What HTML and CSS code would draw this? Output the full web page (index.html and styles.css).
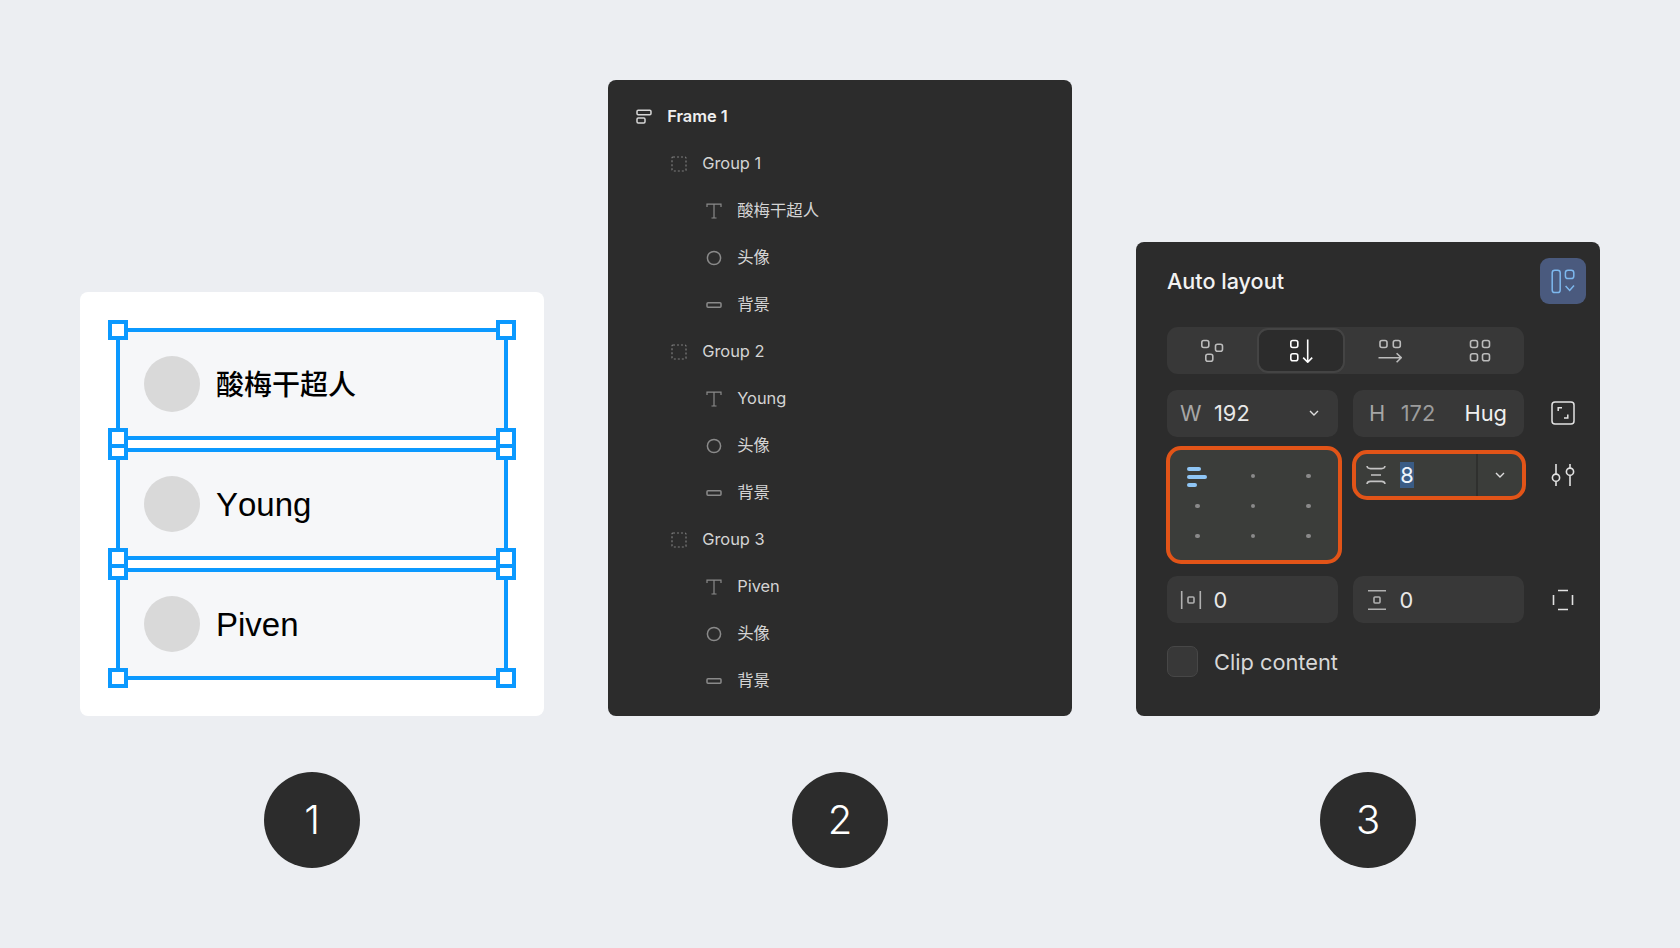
FILE: index.html
```html
<!DOCTYPE html>
<html lang="zh-CN">
<head>
<meta charset="utf-8">
<title>Auto layout</title>
<link rel="stylesheet" href="styles.css">
</head>
<body>
<svg class="defs" width="0" height="0" aria-hidden="true">
  <symbol id="i-group" viewBox="0 0 16 16"><rect x="1" y="1" width="14" height="14" rx="1" fill="none" stroke="#7d7d7d" stroke-width="1.2" stroke-dasharray="2 2"/></symbol>
  <symbol id="i-text" viewBox="0 0 16 16"><path d="M1 4V1.2H15V4M8 1.2V15M5.5 15H10.5" fill="none" stroke="#8a8a8a" stroke-width="1.2"/></symbol>
  <symbol id="i-ellipse" viewBox="0 0 16 16"><circle cx="8" cy="8" r="6.6" fill="none" stroke="#8a8a8a" stroke-width="1.5"/></symbol>
  <symbol id="i-rect" viewBox="0 0 16 16"><rect x="1" y="5.8" width="14" height="4.4" rx="1" fill="none" stroke="#8a8a8a" stroke-width="1.5"/></symbol>
  <symbol id="i-chev" viewBox="0 0 10 6"><path d="M1 1L5 5L9 1" fill="none" stroke="#dddddd" stroke-width="1.4"/></symbol>
</svg>

<main class="board">
  <section class="panel card">
    <div class="frame"><i class="h tl"></i><i class="h tr"></i><i class="h bl"></i><i class="h br"></i><span class="avatar"></span><span class="name zh">酸梅干超人</span></div>
    <div class="frame"><i class="h tl"></i><i class="h tr"></i><i class="h bl"></i><i class="h br"></i><span class="avatar"></span><span class="name">Young</span></div>
    <div class="frame"><i class="h tl"></i><i class="h tr"></i><i class="h bl"></i><i class="h br"></i><span class="avatar"></span><span class="name">Piven</span></div>
  </section>

  <section class="panel layers">
    <div class="layer root"><svg class="li" viewBox="0 0 16 16"><rect x="1" y="1.2" width="14" height="4.6" rx="1.2" fill="none" stroke="#d6d6d6" stroke-width="1.5"/><rect x="1" y="9" width="8" height="5" rx="1.2" fill="none" stroke="#d6d6d6" stroke-width="1.5"/></svg><span>Frame 1</span></div>
    <div class="layer l1"><svg class="li"><use href="#i-group"/></svg><span>Group 1</span></div>
    <div class="layer l2"><svg class="li"><use href="#i-text"/></svg><span class="cjk">酸梅干超人</span></div>
    <div class="layer l2"><svg class="li"><use href="#i-ellipse"/></svg><span class="cjk">头像</span></div>
    <div class="layer l2"><svg class="li"><use href="#i-rect"/></svg><span class="cjk">背景</span></div>
    <div class="layer l1"><svg class="li"><use href="#i-group"/></svg><span>Group 2</span></div>
    <div class="layer l2"><svg class="li"><use href="#i-text"/></svg><span>Young</span></div>
    <div class="layer l2"><svg class="li"><use href="#i-ellipse"/></svg><span class="cjk">头像</span></div>
    <div class="layer l2"><svg class="li"><use href="#i-rect"/></svg><span class="cjk">背景</span></div>
    <div class="layer l1"><svg class="li"><use href="#i-group"/></svg><span>Group 3</span></div>
    <div class="layer l2"><svg class="li"><use href="#i-text"/></svg><span>Piven</span></div>
    <div class="layer l2"><svg class="li"><use href="#i-ellipse"/></svg><span class="cjk">头像</span></div>
    <div class="layer l2"><svg class="li"><use href="#i-rect"/></svg><span class="cjk">背景</span></div>
  </section>

  <section class="panel props">
    <header class="head">
      <h2 class="title">Auto layout</h2>
      <button class="accent" type="button">
        <svg class="i28" viewBox="0 0 28 28" fill="none" stroke="#7db8ee" stroke-width="1.5"><rect x="3.2" y="3.2" width="8" height="22.4" rx="2.6"/><rect x="16.4" y="3.2" width="8.4" height="8.4" rx="2.6"/><path d="M16.6 19L20.7 23.4L25 18.4"/></svg>
      </button>
    </header>

    <div class="row mode">
      <div class="seg">
        <span class="seg-item"><svg class="i24" viewBox="0 0 24 24" fill="none" stroke="#bcbcbc" stroke-width="1.6"><rect x="1.8" y="1.5" width="7" height="7" rx="2"/><rect x="15.5" y="5.2" width="7" height="7" rx="2"/><rect x="5.8" y="15.2" width="7" height="7" rx="2"/></svg></span>
        <span class="seg-item on"><svg class="i24" viewBox="0 0 24 24" fill="none" stroke="#ffffff" stroke-width="1.6"><rect x="1.8" y="1.5" width="7" height="7" rx="2"/><rect x="1.8" y="14.8" width="7" height="7" rx="2"/><path d="M18.7 .5V23M14.2 18.6L18.7 23.2L23.2 18.6"/></svg></span>
        <span class="seg-item"><svg class="i24" viewBox="0 0 24 24" fill="none" stroke="#bcbcbc" stroke-width="1.6"><rect x="2" y="1.5" width="7" height="7" rx="2"/><rect x="15.3" y="1.5" width="7" height="7" rx="2"/><path d="M.5 18.7H23M18.6 14.2L23.2 18.7L18.6 23.2"/></svg></span>
        <span class="seg-item"><svg class="i24" viewBox="0 0 24 24" fill="none" stroke="#bcbcbc" stroke-width="1.6"><rect x="2.5" y="1.5" width="7" height="7" rx="2"/><rect x="14.5" y="1.5" width="7" height="7" rx="2"/><rect x="2.5" y="14.8" width="7" height="7" rx="2"/><rect x="14.5" y="14.8" width="7" height="7" rx="2"/></svg></span>
      </div>
    </div>

    <div class="row size">
      <div class="field"><span class="lab">W</span><span class="val">192</span><svg class="chev"><use href="#i-chev"/></svg></div>
      <div class="field"><span class="lab">H</span><span class="val dim">172</span><span class="val hug">Hug</span></div>
      <svg class="i24 side" viewBox="0 0 24 24" fill="none" stroke="#e2e2e2" stroke-width="1.5"><rect x="1" y="1" width="22" height="22" rx="3"/><path d="M7.2 10V6.8H11M16.8 13.5V17H13"/></svg>
    </div>

    <div class="row align">
      <div class="grid-box">
        <span class="spot bars"><i></i><i></i><i></i></span>
        <span class="spot"><i class="dot"></i></span><span class="spot"><i class="dot"></i></span>
        <span class="spot"><i class="dot"></i></span><span class="spot"><i class="dot"></i></span><span class="spot"><i class="dot"></i></span>
        <span class="spot"><i class="dot"></i></span><span class="spot"><i class="dot"></i></span><span class="spot"><i class="dot"></i></span>
      </div>
      <div class="gap-box">
        <svg class="i24" viewBox="0 0 24 24" fill="none" stroke="#c4c4c4" stroke-width="1.6"><path d="M3 3Q3.4 5.6 6.5 5.6H17.5Q20.6 5.6 21 3M7 12H17M3 21Q3.4 18.4 6.5 18.4H17.5Q20.6 18.4 21 21"/></svg>
        <span class="sel">8</span>
        <span class="gap-menu"><svg class="chev"><use href="#i-chev"/></svg></span>
      </div>
      <svg class="i24 side" viewBox="0 0 24 24" fill="none" stroke="#e2e2e2" stroke-width="1.6"><path d="M5 1V11M5 18.5V23M19 1V5M19 12.5V23"/><circle cx="5" cy="14.7" r="3.6"/><circle cx="19" cy="8.7" r="3.6"/></svg>
    </div>

    <div class="row pad">
      <div class="field"><svg class="i24 pico" viewBox="0 0 24 24" fill="none" stroke="#b0b0b0" stroke-width="1.6"><path d="M2.7 3V21M21.3 3V21"/><rect x="9" y="9" width="6" height="6" rx="1"/></svg><span class="val">0</span></div>
      <div class="field"><svg class="i24 pico" viewBox="0 0 24 24" fill="none" stroke="#b0b0b0" stroke-width="1.6"><path d="M3 2.7H21M3 21.3H21"/><rect x="9" y="9" width="6" height="6" rx="1"/></svg><span class="val">0</span></div>
      <svg class="i24 side" viewBox="0 0 24 24" fill="none" stroke="#e2e2e2" stroke-width="1.6"><path d="M7 2.5H17M7 21.5H17M2.5 7V17M21.5 7V17"/></svg>
    </div>

    <div class="row clip">
      <span class="check"></span>
      <span class="clip-text">Clip content</span>
    </div>
  </section>

  <div class="num">1</div>
  <div class="num">2</div>
  <div class="num">3</div>
</main>
</body>
</html>
```

FILE: styles.css
```css
* { box-sizing: border-box; }
html, body { margin: 0; height: 948px; overflow: hidden; }
body {
  background: #eceef2;
  font-family: Inter, "Noto Sans CJK SC", sans-serif;
}
.defs { position: absolute; }

.board {
  display: grid;
  grid-template-columns: repeat(3, 464px);
  grid-template-rows: 636px 96px;
  column-gap: 64px;
  row-gap: 56px;
  padding: 80px 80px 0;
}

.panel { border-radius: 8px; align-self: end; }

/* Panel 1 */
.card {
  background: #fff;
  height: 424px;
  padding: 36px;
  display: flex;
  flex-direction: column;
  gap: 8px;
}
.frame {
  position: relative;
  height: 112px;
  border: 4px solid #0b99ff;
  background: #f6f7f9;
  display: flex;
  align-items: center;
  gap: 16px;
  padding-left: 24px;
}
.frame:nth-child(1) { z-index: 3; }
.frame:nth-child(2) { z-index: 2; }
.frame:nth-child(3) { z-index: 1; }
.avatar { width: 56px; height: 56px; border-radius: 50%; background: #d9d9d9; }
.name {
  font-family: "Liberation Sans", "Noto Sans CJK SC", sans-serif;
  font-size: 33px;
  font-kerning: none;
  line-height: 40px;
  padding-top: 2px;
  color: #000;
}
.name.zh {
  font-family: "Noto Sans CJK SC", sans-serif;
  font-size: 28px;
  font-weight: 500;
  padding-top: 0;
  padding-bottom: 2px;
}
.h {
  position: absolute;
  width: 20px;
  height: 20px;
  background: #fff;
  border: 4px solid #0b99ff;
}
.tl { top: -12px; left: -12px; }
.tr { top: -12px; right: -12px; }
.bl { bottom: -12px; left: -12px; }
.br { bottom: -12px; right: -12px; }

/* Panel 2 */
.layers {
  background: #2c2c2c;
  height: 636px;
  padding: 13px 0 12px;
}
.layer {
  display: flex;
  align-items: center;
  gap: 15.2px;
  height: 47px;
  font-size: 16.4px;
  line-height: 20px;
  color: #d4d4d4;
}
.li { width: 16px; height: 16px; flex: none; }
.cjk { font-family: "Noto Sans CJK SC", sans-serif; padding-bottom: 2px; }
.root { padding-left: 28px; color: #f0f0f0; font-weight: 600; }
.l1 { padding-left: 63px; }
.l2 { padding-left: 98px; }
.layer > span { position: relative; bottom: .5px; }

/* Panel 3 */
.props {
  background: #2c2c2c;
  height: 474px;
  padding: 16px 14px 0 31px;
  color: #e8e8e8;
}
.head { display: flex; justify-content: space-between; align-items: center; height: 46px; }
.title { margin: 0; font-size: 21.6px; font-weight: 500; color: #f2f2f2; }
.accent {
  width: 46px;
  height: 46px;
  padding: 0;
  border: 0;
  border-radius: 9px;
  background: #4a5a7e;
  display: flex;
  align-items: center;
  justify-content: center;
}
.i28 { width: 28px; height: 28px; }
.i24 { width: 24px; height: 24px; flex: none; }

.row { display: flex; gap: 15px; align-items: center; }
.mode { margin-top: 23px; height: 47px; }
.size { margin-top: 16px; height: 47px; }
.size .field { padding-bottom: 1px; }
.size .side { margin-top: -1px; }
.align { margin-top: 9px; height: 118px; margin-left: -1px; gap: 10px; align-items: flex-start; }
.pad { margin-top: 12px; height: 47px; }
.clip { margin-top: 23px; height: 31px; gap: 16px; }
.side { margin-left: 12px; }
.align .side { margin-left: 15px; margin-top: 17px; }

.seg {
  width: 357px;
  height: 47px;
  border-radius: 11px;
  background: #383838;
  display: grid;
  grid-template-columns: 90px 88px 90px 89px;
}
.seg-item { display: flex; align-items: center; justify-content: center; }
.seg-item.on {
  margin: 1px 0;
  background: #2c2c2c;
  border: 2px solid #444;
  border-radius: 11px;
}

.field {
  width: 171px;
  height: 47px;
  border-radius: 10px;
  background: #383838;
  display: flex;
  align-items: center;
  padding-left: 13px;
  font-size: 21.8px;
}
.lab { width: 34px; color: #a6a6a6; }
.field + .field > .lab { width: 31.7px; }
.size .field + .field { padding-left: 16px; }
.val { color: #e8e8e8; }
.dim { color: #9c9c9c; }
.hug { margin-left: auto; margin-right: 17px; color: #f0f0f0; }
.chev { width: 10px; height: 6px; margin-left: auto; margin-right: 19px; }
.pico { margin-left: -1px; margin-right: 10.4px; }

.grid-box {
  width: 176px;
  height: 118px;
  border: 4px solid #e25418;
  border-radius: 15px;
  background: #3b3d3a;
  display: grid;
  grid-template-columns: repeat(3, 55.4px);
  grid-template-rows: repeat(3, 30px);
  padding: 11px 0 0;
}
.spot { display: flex; align-items: center; justify-content: center; }
.dot { width: 4.5px; height: 4.5px; border-radius: 50%; background: #8a8a8a; }
.bars { flex-direction: column; align-items: flex-start; gap: 4px; padding: 2px 0 0 17px; }
.bars i { display: block; height: 4px; border-radius: 2px; background: #8fc6f5; width: 14px; }
.bars i:nth-child(2) { width: 20px; }
.bars i:nth-child(3) { width: 10px; }

.gap-box {
  width: 174px;
  height: 50px;
  margin-top: 4px;
  border: 4px solid #e25418;
  border-radius: 15px;
  background: #3b3d3a;
  display: flex;
  align-items: center;
  padding-left: 8px;
  font-size: 21.8px;
}
.sel {
  margin-left: 12px;
  width: 14px;
  height: 26px;
  line-height: 26px;
  text-align: center;
  background: #3a5c85;
  color: #eef4fb;
}
.gap-menu {
  margin-left: auto;
  width: 46px;
  height: 42px;
  border-left: 2px solid #2f302e;
  padding-right: 1px;
  display: flex;
  align-items: center;
  justify-content: center;
}
.gap-menu .chev { margin: 0; }

.check {
  width: 31px;
  height: 31px;
  border-radius: 7px;
  background: #383838;
  border: 1.5px solid #474747;
}
.clip-text { font-size: 21.8px; color: #d8d8d8; }

/* Step numbers */
.num {
  width: 96px;
  height: 96px;
  justify-self: center;
  border-radius: 50%;
  background: #2c2c2c;
  color: #fff;
  font-size: 40px;
  font-weight: 300;
  line-height: 96px;
  text-align: center;
}
```
